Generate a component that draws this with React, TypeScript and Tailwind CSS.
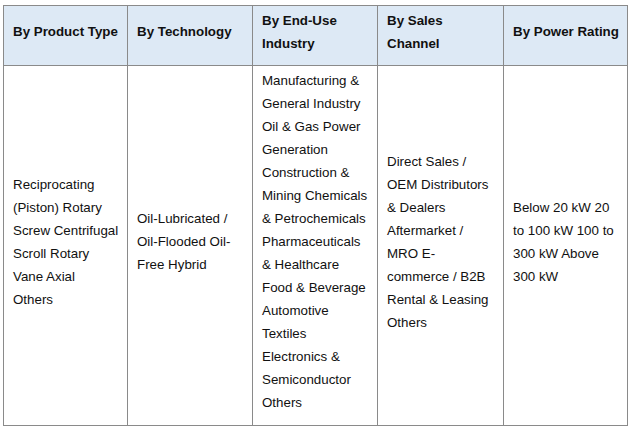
import React from 'react';

const headers = [
  ['By Product Type'],
  ['By Technology'],
  ['By End-Use', 'Industry'],
  ['By Sales', 'Channel'],
  ['By Power Rating'],
];

const cells = [
  ['Reciprocating', '(Piston) Rotary', 'Screw Centrifugal', 'Scroll Rotary', 'Vane Axial', 'Others'],
  ['Oil-Lubricated /', 'Oil-Flooded Oil-', 'Free Hybrid'],
  [
    'Manufacturing &',
    'General Industry',
    'Oil & Gas Power',
    'Generation',
    'Construction &',
    'Mining Chemicals',
    '& Petrochemicals',
    'Pharmaceuticals',
    '& Healthcare',
    'Food & Beverage',
    'Automotive',
    'Textiles',
    'Electronics &',
    'Semiconductor',
    'Others',
  ],
  ['Direct Sales /', 'OEM Distributors', '& Dealers', 'Aftermarket /', 'MRO E-', 'commerce / B2B', 'Rental & Leasing', 'Others'],
  ['Below 20 kW 20', 'to 100 kW 100 to', '300 kW Above', '300 kW'],
];

const widths = ['w-[124px]', 'w-[125px]', 'w-[125px]', 'w-[126px]', 'w-[124px]'];

function Lines({ lines }: { lines: string[] }) {
  return (
    <>
      {lines.map((l, i) => (
        <div key={i} className="whitespace-nowrap">
          {l}
        </div>
      ))}
    </>
  );
}

export default function App() {
  return (
    <div className="w-[632px] h-[430px] bg-white pt-[5px] pl-[3px] font-['Liberation_Sans',Arial,sans-serif] text-[13.33px] leading-[23px] text-[#111]">
      <table className="table-fixed border-collapse w-[624px]">
        <colgroup>
          {widths.map((w, i) => (
            <col key={i} className={w} />
          ))}
        </colgroup>
        <thead>
          <tr className="h-[60px] bg-[#dde9f5]">
            {headers.map((h, i) => (
              <th key={i} className="border border-[#8a8a8a] pl-[9px] pr-[8px] pt-0 pb-[8px] text-left align-middle font-bold">
                <Lines lines={h} />
              </th>
            ))}
          </tr>
        </thead>
        <tbody>
          <tr className="h-[360px]">
            {cells.map((c, i) => (
              <td key={i} className="border border-[#8a8a8a] pl-[9px] pr-[8px] pt-0 pb-[8px] align-middle">
                <Lines lines={c} />
              </td>
            ))}
          </tr>
        </tbody>
      </table>
    </div>
  );
}
